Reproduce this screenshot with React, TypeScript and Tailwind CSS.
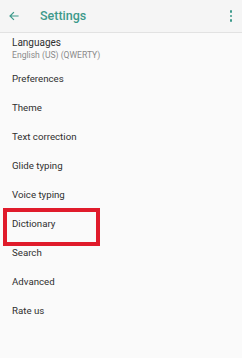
import React from 'react';

const items = [
  'Preferences',
  'Theme',
  'Text correction',
  'Glide typing',
  'Voice typing',
  'Dictionary',
  'Search',
  'Advanced',
  'Rate us',
];

export default function App() {
  return (
    <div className="relative w-[242px] h-[358px] bg-[#fafafa] overflow-hidden font-['Roboto',sans-serif]">
      <header className="h-[33px] flex items-center bg-[#f5f5f5] border-b border-[#e2e2e2]">
        <svg className="ml-[8px] w-[12px] h-[12px]" viewBox="0 0 24 24" fill="none">
          <path d="M20 12H5M11 5l-7 7 7 7" stroke="#3d9a8b" strokeWidth="2.4" strokeLinecap="square" />
        </svg>
        <span className="ml-[20px] text-[12.5px] font-medium text-[#3d9a8b]">Settings</span>
        <div className="ml-auto mr-[10px] flex flex-col gap-[2px]">
          <span className="block w-[2.5px] h-[2.5px] rounded-full bg-[#3d9a8b]" />
          <span className="block w-[2.5px] h-[2.5px] rounded-full bg-[#3d9a8b]" />
          <span className="block w-[2.5px] h-[2.5px] rounded-full bg-[#3d9a8b]" />
        </div>
      </header>
      <div className="pl-[12px] pt-[3px] h-[32px]">
        <div className="text-[10px] leading-[13px] text-[#2f2f2f]">Languages</div>
        <div className="text-[8.6px] leading-[12px] text-[#8a8a8a]">English (US) (QWERTY)</div>
      </div>
      <ul>
        {items.map(item => (
          <li key={item} className="h-[29px] flex items-center pl-[12px] text-[9.7px] text-[#2f2f2f]">
            {item}
          </li>
        ))}
      </ul>
      <div className="absolute left-[3px] top-[208px] w-[97px] h-[38px] border-[4px] border-[#e01b2b]" />
    </div>
  );
}
